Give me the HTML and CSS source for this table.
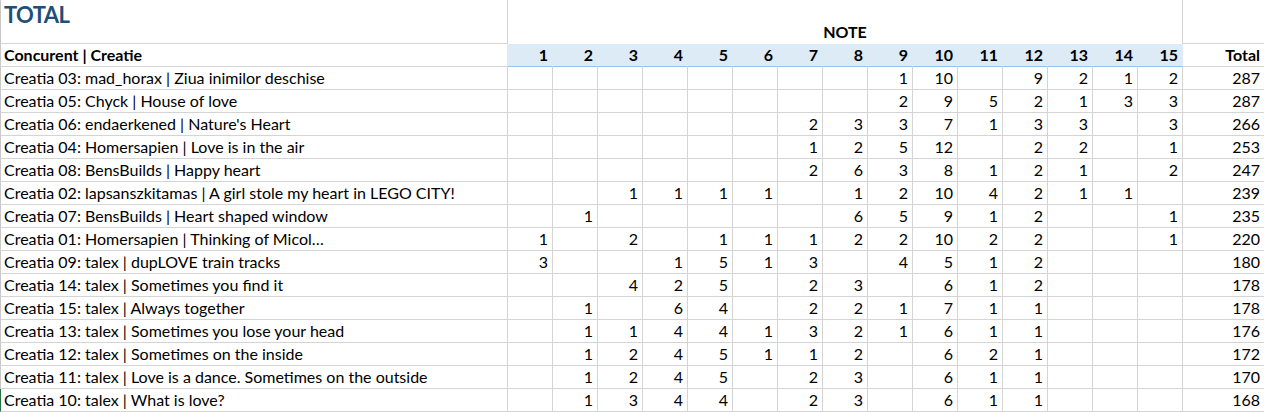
FILE: index.html
```html
<!DOCTYPE html>
<html lang="ro">
<head>
<meta charset="utf-8">
<title>TOTAL</title>
<link rel="stylesheet" href="styles.css">
</head>
<body>
<div class="sheet">
  <div class="row top">
    <div class="cell name title-cell"><span class="title">TOTAL</span></div>
    <div class="cell note-cell">NOTE</div>
    <div class="cell total"></div>
  </div>
  <div class="row head">
    <div class="cell name">Concurent | Creatie</div>
    <div class="cell num">1</div><div class="cell num">2</div><div class="cell num">3</div><div class="cell num">4</div><div class="cell num">5</div><div class="cell num">6</div><div class="cell num">7</div><div class="cell num">8</div><div class="cell num">9</div><div class="cell num">10</div><div class="cell num">11</div><div class="cell num">12</div><div class="cell num">13</div><div class="cell num">14</div><div class="cell num">15</div>
    <div class="cell total">Total</div>
  </div>
  <div class="row"><div class="cell name">Creatia 03: mad_horax | Ziua inimilor deschise</div><div class="cell num"></div><div class="cell num"></div><div class="cell num"></div><div class="cell num"></div><div class="cell num"></div><div class="cell num"></div><div class="cell num"></div><div class="cell num"></div><div class="cell num">1</div><div class="cell num">10</div><div class="cell num"></div><div class="cell num">9</div><div class="cell num">2</div><div class="cell num">1</div><div class="cell num">2</div><div class="cell total">287</div></div>
  <div class="row"><div class="cell name">Creatia 05: Chyck | House of love</div><div class="cell num"></div><div class="cell num"></div><div class="cell num"></div><div class="cell num"></div><div class="cell num"></div><div class="cell num"></div><div class="cell num"></div><div class="cell num"></div><div class="cell num">2</div><div class="cell num">9</div><div class="cell num">5</div><div class="cell num">2</div><div class="cell num">1</div><div class="cell num">3</div><div class="cell num">3</div><div class="cell total">287</div></div>
  <div class="row"><div class="cell name">Creatia 06: endaerkened | Nature's Heart</div><div class="cell num"></div><div class="cell num"></div><div class="cell num"></div><div class="cell num"></div><div class="cell num"></div><div class="cell num"></div><div class="cell num">2</div><div class="cell num">3</div><div class="cell num">3</div><div class="cell num">7</div><div class="cell num">1</div><div class="cell num">3</div><div class="cell num">3</div><div class="cell num"></div><div class="cell num">3</div><div class="cell total">266</div></div>
  <div class="row"><div class="cell name">Creatia 04: Homersapien | Love is in the air</div><div class="cell num"></div><div class="cell num"></div><div class="cell num"></div><div class="cell num"></div><div class="cell num"></div><div class="cell num"></div><div class="cell num">1</div><div class="cell num">2</div><div class="cell num">5</div><div class="cell num">12</div><div class="cell num"></div><div class="cell num">2</div><div class="cell num">2</div><div class="cell num"></div><div class="cell num">1</div><div class="cell total">253</div></div>
  <div class="row"><div class="cell name">Creatia 08: BensBuilds | Happy heart</div><div class="cell num"></div><div class="cell num"></div><div class="cell num"></div><div class="cell num"></div><div class="cell num"></div><div class="cell num"></div><div class="cell num">2</div><div class="cell num">6</div><div class="cell num">3</div><div class="cell num">8</div><div class="cell num">1</div><div class="cell num">2</div><div class="cell num">1</div><div class="cell num"></div><div class="cell num">2</div><div class="cell total">247</div></div>
  <div class="row"><div class="cell name">Creatia 02: lapsanszkitamas | A girl stole my heart in LEGO CITY!</div><div class="cell num"></div><div class="cell num"></div><div class="cell num">1</div><div class="cell num">1</div><div class="cell num">1</div><div class="cell num">1</div><div class="cell num"></div><div class="cell num">1</div><div class="cell num">2</div><div class="cell num">10</div><div class="cell num">4</div><div class="cell num">2</div><div class="cell num">1</div><div class="cell num">1</div><div class="cell num"></div><div class="cell total">239</div></div>
  <div class="row"><div class="cell name">Creatia 07: BensBuilds | Heart shaped window</div><div class="cell num"></div><div class="cell num">1</div><div class="cell num"></div><div class="cell num"></div><div class="cell num"></div><div class="cell num"></div><div class="cell num"></div><div class="cell num">6</div><div class="cell num">5</div><div class="cell num">9</div><div class="cell num">1</div><div class="cell num">2</div><div class="cell num"></div><div class="cell num"></div><div class="cell num">1</div><div class="cell total">235</div></div>
  <div class="row"><div class="cell name">Creatia 01: Homersapien | Thinking of Micol…</div><div class="cell num">1</div><div class="cell num"></div><div class="cell num">2</div><div class="cell num"></div><div class="cell num">1</div><div class="cell num">1</div><div class="cell num">1</div><div class="cell num">2</div><div class="cell num">2</div><div class="cell num">10</div><div class="cell num">2</div><div class="cell num">2</div><div class="cell num"></div><div class="cell num"></div><div class="cell num">1</div><div class="cell total">220</div></div>
  <div class="row"><div class="cell name">Creatia 09: talex | dupLOVE train tracks</div><div class="cell num">3</div><div class="cell num"></div><div class="cell num"></div><div class="cell num">1</div><div class="cell num">5</div><div class="cell num">1</div><div class="cell num">3</div><div class="cell num"></div><div class="cell num">4</div><div class="cell num">5</div><div class="cell num">1</div><div class="cell num">2</div><div class="cell num"></div><div class="cell num"></div><div class="cell num"></div><div class="cell total">180</div></div>
  <div class="row"><div class="cell name">Creatia 14: talex | Sometimes you find it</div><div class="cell num"></div><div class="cell num"></div><div class="cell num">4</div><div class="cell num">2</div><div class="cell num">5</div><div class="cell num"></div><div class="cell num">2</div><div class="cell num">3</div><div class="cell num"></div><div class="cell num">6</div><div class="cell num">1</div><div class="cell num">2</div><div class="cell num"></div><div class="cell num"></div><div class="cell num"></div><div class="cell total">178</div></div>
  <div class="row"><div class="cell name">Creatia 15: talex | Always together</div><div class="cell num"></div><div class="cell num">1</div><div class="cell num"></div><div class="cell num">6</div><div class="cell num">4</div><div class="cell num"></div><div class="cell num">2</div><div class="cell num">2</div><div class="cell num">1</div><div class="cell num">7</div><div class="cell num">1</div><div class="cell num">1</div><div class="cell num"></div><div class="cell num"></div><div class="cell num"></div><div class="cell total">178</div></div>
  <div class="row"><div class="cell name">Creatia 13: talex | Sometimes you lose your head</div><div class="cell num"></div><div class="cell num">1</div><div class="cell num">1</div><div class="cell num">4</div><div class="cell num">4</div><div class="cell num">1</div><div class="cell num">3</div><div class="cell num">2</div><div class="cell num">1</div><div class="cell num">6</div><div class="cell num">1</div><div class="cell num">1</div><div class="cell num"></div><div class="cell num"></div><div class="cell num"></div><div class="cell total">176</div></div>
  <div class="row"><div class="cell name">Creatia 12: talex | Sometimes on the inside</div><div class="cell num"></div><div class="cell num">1</div><div class="cell num">2</div><div class="cell num">4</div><div class="cell num">5</div><div class="cell num">1</div><div class="cell num">1</div><div class="cell num">2</div><div class="cell num"></div><div class="cell num">6</div><div class="cell num">2</div><div class="cell num">1</div><div class="cell num"></div><div class="cell num"></div><div class="cell num"></div><div class="cell total">172</div></div>
  <div class="row"><div class="cell name">Creatia 11: talex | Love is a dance. Sometimes on the outside</div><div class="cell num"></div><div class="cell num">1</div><div class="cell num">2</div><div class="cell num">4</div><div class="cell num">5</div><div class="cell num"></div><div class="cell num">2</div><div class="cell num">3</div><div class="cell num"></div><div class="cell num">6</div><div class="cell num">1</div><div class="cell num">1</div><div class="cell num"></div><div class="cell num"></div><div class="cell num"></div><div class="cell total">170</div></div>
  <div class="row selected"><div class="cell name">Creatia 10: talex | What is love?</div><div class="cell num"></div><div class="cell num">1</div><div class="cell num">3</div><div class="cell num">4</div><div class="cell num">4</div><div class="cell num"></div><div class="cell num">2</div><div class="cell num">3</div><div class="cell num"></div><div class="cell num">6</div><div class="cell num">1</div><div class="cell num">1</div><div class="cell num"></div><div class="cell num"></div><div class="cell num"></div><div class="cell total">168</div></div>
</div>
</body>
</html>
```

FILE: styles.css
```css
* { box-sizing: border-box; }

html, body {
  margin: 0;
  padding: 0;
  background: #ffffff;
}

body {
  font-family: Lato, "Open Sans", sans-serif;
  font-size: 16px;
  color: #000000;
  overflow: hidden;
}

.sheet {
  width: 1264px;
}

.row {
  display: grid;
  grid-template-columns: 508px repeat(15, 45px) 1fr;
  height: 23px;
}

.cell {
  height: 100%;
  line-height: 22px;
  white-space: nowrap;
  overflow: hidden;
  border-bottom: 1px solid #d4d4d4;
}

.name {
  border-left: 1px solid #c8c8c8;
  border-right: 1px solid #d4d4d4;
  padding-left: 3px;
}

.num {
  border-right: 1px solid #d4d4d4;
  text-align: right;
  padding-right: 4px;
}

.total {
  text-align: right;
  padding-right: 4px;
}

/* top row */
.row.top {
  height: 44px;
}

.title-cell {
  padding-top: 2px;
  line-height: 26px;
}

.title {
  font-size: 22px;
  font-weight: 700;
  letter-spacing: -0.6px;
  color: #1f4e78;
}

.note-cell {
  grid-column: span 15;
  border-right: 1px solid #d4d4d4;
  border-bottom: none;
  text-align: center;
  font-weight: 700;
  display: flex;
  align-items: flex-end;
  justify-content: center;
  padding-bottom: 1px;
}

/* header row */
.row.head .cell {
  font-weight: 700;
}

.row.head .name {
  border-right-color: #ddebf7;
}

.row.head .num {
  background: #ddebf7;
  border-right-color: #ddebf7;
  border-bottom-color: #9bc2e6;
}

/* selected row marker */
.row.selected .name {
  border-left: 1px solid #217346;
}
```
